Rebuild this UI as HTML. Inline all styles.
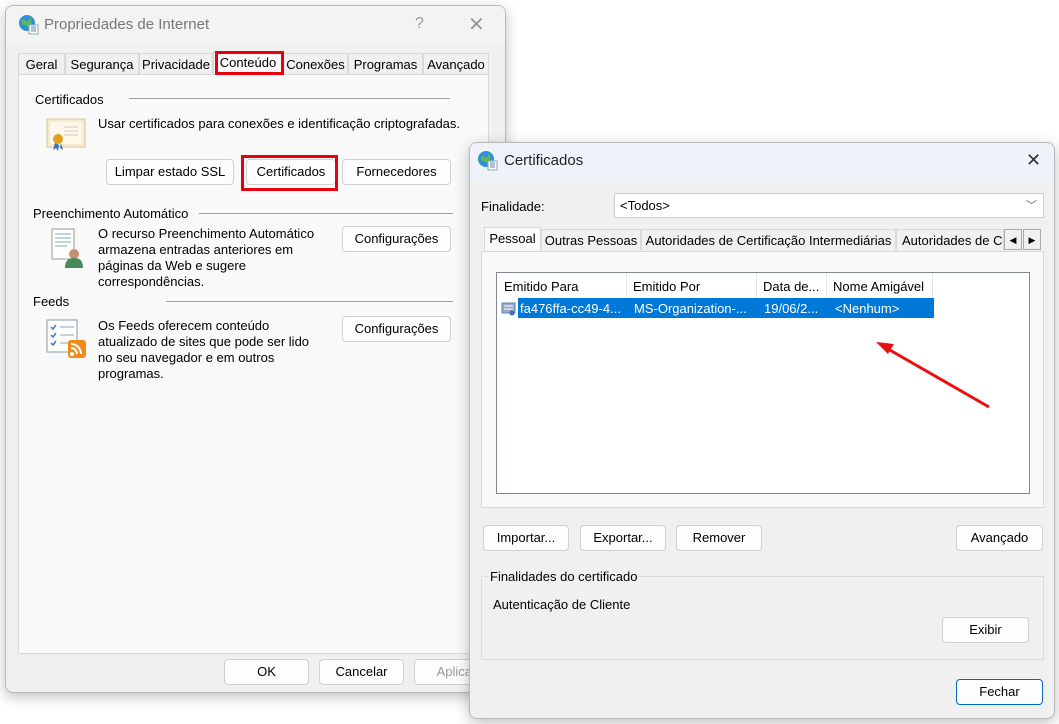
<!DOCTYPE html>
<html><head><meta charset="utf-8"><style>
*{box-sizing:border-box;margin:0;padding:0}
body{width:1059px;height:724px;background:#fff;position:relative;overflow:hidden;font-family:"Liberation Sans",sans-serif;font-size:13px;color:#000}
.a{position:absolute;white-space:nowrap}
.win{position:absolute;background:#f0f0f0;border:1px solid #b9b9b9;border-radius:8px;box-shadow:0 4px 14px rgba(0,0,0,.25);overflow:hidden}
.btn{position:absolute;background:#fdfdfd;border:1px solid #d0d0d0;border-radius:4px;text-align:center;line-height:24px;height:26px}
.tab{position:absolute;top:0;height:21px;line-height:21px;border:1px solid #d9d9d9;border-bottom:none;background:#f0f0f0;text-align:center;overflow:hidden}
.red{position:absolute;border:3px solid #e8000f}
.line{position:absolute;height:1px;background:#a0a0a0}
</style></head><body>

<!-- Left window -->
<div class="win" style="left:5px;top:5px;width:501px;height:688px;">
 <div class="a" style="left:0;top:0;width:501px;height:40px;background:#f3f3f3"></div>
 <svg class="a" style="left:12px;top:8px" width="22" height="22" viewBox="0 0 22 22"><circle cx="9" cy="9" r="8" fill="#2f8fd8"/><path d="M4 6c3-1 4 2 6 1s1-4 3-3c1 2-1 4 1 6s-3 4-5 2-4 0-5-2z" fill="#5cb85c"/><rect x="11" y="11" width="9" height="9" fill="#fff" stroke="#8aa"/><path d="M13 13h5M13 15h5M13 17h5" stroke="#58a"/></svg>
 <div class="a" style="left:38px;top:10px;font-size:15px;color:#777">Propriedades de Internet</div>
 <div class="a" style="left:409px;top:9px;font-size:16px;color:#999">?</div>
 <div class="a" style="left:462px;top:6px;font-size:20px;color:#999">✕</div>
 <div class="a" style="left:12px;top:47px;width:472px;height:22px">
  <div class="tab" style="left:0;width:47px">Geral</div>
  <div class="tab" style="left:47px;width:74px">Segurança</div>
  <div class="tab" style="left:121px;width:74px">Privacidade</div>
  <div class="tab" style="left:195px;width:70px;top:-2px;height:24px;background:#f9f9f9">Conteúdo</div>
  <div class="tab" style="left:265px;width:65px">Conexões</div>
  <div class="tab" style="left:330px;width:75px">Programas</div>
  <div class="tab" style="left:405px;width:66px">Avançado</div>
 </div>
 <div class="a" style="left:12px;top:68px;width:471px;height:580px;background:#f9f9f9;border:1px solid #d9d9d9"></div>
 <div class="red" style="left:209px;top:45px;width:69px;height:24px"></div>
 <div class="a" style="left:29px;top:86px">Certificados</div>
 <div class="line" style="left:123px;top:92px;width:321px"></div>
 <svg class="a" style="left:40px;top:111px" width="40" height="36" viewBox="0 0 40 36"><rect x="1" y="2" width="38" height="28" fill="#f7ead0" stroke="#d8c59a"/><rect x="4" y="5" width="32" height="22" fill="#fff8ea"/><path d="M18 10h14M18 14h14M18 18h14" stroke="#ccc"/><circle cx="12" cy="22" r="5" fill="#e0a020"/><path d="M9 26l-2 7 3-2 2 3 1-6M15 26l2 7-3-2" fill="#3b6fc4"/></svg>
 <div class="a" style="left:92px;top:110px">Usar certificados para conexões e identificação criptografadas.</div>
 <div class="btn" style="left:100px;top:153px;width:128px">Limpar estado SSL</div>
 <div class="btn" style="left:240px;top:153px;width:90px">Certificados</div>
 <div class="red" style="left:235px;top:149px;width:97px;height:36px"></div>
 <div class="btn" style="left:336px;top:153px;width:109px">Fornecedores</div>
 <div class="a" style="left:27px;top:200px">Preenchimento Automático</div>
 <div class="line" style="left:193px;top:207px;width:254px"></div>
 <svg class="a" style="left:44px;top:222px" width="36" height="40" viewBox="0 0 36 40"><rect x="2" y="1" width="22" height="30" fill="#fff" stroke="#999"/><path d="M5 6h16M5 10h16M5 14h16M5 18h12" stroke="#7aa"/><circle cx="24" cy="26" r="5" fill="#c89070"/><path d="M15 40c0-8 4-10 9-10s9 2 9 10z" fill="#4a8a5a"/></svg>
 <div class="a" style="left:92px;top:220px;line-height:16px;white-space:normal;width:228px">O recurso Preenchimento Automático armazena entradas anteriores em páginas da Web e sugere correspondências.</div>
 <div class="btn" style="left:336px;top:220px;width:109px">Configurações</div>
 <div class="a" style="left:27px;top:288px">Feeds</div>
 <div class="line" style="left:160px;top:295px;width:287px"></div>
 <svg class="a" style="left:40px;top:313px" width="42" height="40" viewBox="0 0 42 40"><rect x="1" y="1" width="30" height="32" fill="#fff" stroke="#8899aa"/><path d="M5 8l2 2 3-4M5 16l2 2 3-4M5 24l2 2 3-4" stroke="#3a7ad0" fill="none" stroke-width="1.5"/><path d="M14 8h14M14 16h14M14 24h14" stroke="#8aa"/><rect x="22" y="21" width="18" height="18" rx="3" fill="#f08a18"/><circle cx="26" cy="35" r="2" fill="#fff"/><path d="M25 29a6 6 0 0 1 6 6M25 25a10 10 0 0 1 10 10" stroke="#fff" stroke-width="2" fill="none"/></svg>
 <div class="a" style="left:92px;top:312px;line-height:16px;white-space:normal;width:222px">Os Feeds oferecem conteúdo atualizado de sites que pode ser lido no seu navegador e em outros programas.</div>
 <div class="btn" style="left:336px;top:310px;width:109px">Configurações</div>
 <div class="btn" style="left:218px;top:653px;width:85px">OK</div>
 <div class="btn" style="left:313px;top:653px;width:85px">Cancelar</div>
 <div class="btn" style="left:408px;top:653px;width:85px;color:#999">Aplicar</div>
</div>

<!-- Right window -->
<div class="win" style="left:469px;top:142px;width:586px;height:577px;">
 <div class="a" style="left:0;top:0;width:586px;height:37px;background:#eef2f9"></div>
 <svg class="a" style="left:7px;top:7px" width="22" height="22" viewBox="0 0 22 22"><circle cx="9" cy="9" r="8" fill="#2f8fd8"/><path d="M4 6c3-1 4 2 6 1s1-4 3-3c1 2-1 4 1 6s-3 4-5 2-4 0-5-2z" fill="#5cb85c"/><rect x="11" y="11" width="9" height="9" fill="#fff" stroke="#8aa"/><path d="M13 13h5M13 15h5M13 17h5" stroke="#58a"/></svg>
 <div class="a" style="left:34px;top:9px;font-size:15px;color:#222">Certificados</div>
 <div class="a" style="left:556px;top:7px;font-size:18px;color:#333">✕</div>
 <div class="a" style="left:11px;top:56px">Finalidade:</div>
 <div class="a" style="left:144px;top:50px;width:430px;height:25px;background:#fff;border:1px solid #ccc;padding:4px 5px">&lt;Todos&gt;<span style="position:absolute;right:6px;top:3px;color:#666;font-size:11px">﹀</span></div>
 <div class="a" style="left:11px;top:86px;width:563px;height:22px">
  <div class="tab" style="left:3px;width:57px;top:-2px;height:24px;background:#f9f9f9">Pessoal</div>
  <div class="tab" style="left:60px;width:100px">Outras Pessoas</div>
  <div class="tab" style="left:160px;width:255px">Autoridades de Certificação Intermediárias</div>
  <div class="tab" style="left:415px;width:108px;text-align:left;padding-left:5px">Autoridades de Ce</div>
  <div class="tab" style="left:523px;width:18px;border:1px solid #aaa;background:#f0f0f0;font-size:9px">◀</div>
  <div class="tab" style="left:542px;width:18px;border:1px solid #aaa;background:#f0f0f0;font-size:9px">▶</div>
 </div>
 <div class="a" style="left:11px;top:108px;width:563px;height:257px;background:#f9f9f9;border:1px solid #d9d9d9"></div>
 <div class="a" style="left:26px;top:129px;width:534px;height:222px;background:#fff;border:1px solid #828790"></div>
 <div class="a" style="left:27px;top:130px;width:437px;height:25px;background:#fff">
  <div class="a" style="left:0;top:0;width:130px;height:25px;border-right:1px solid #e5e5e5;padding:6px 7px">Emitido Para</div>
  <div class="a" style="left:130px;top:0;width:130px;height:25px;border-right:1px solid #e5e5e5;padding:6px 6px">Emitido Por</div>
  <div class="a" style="left:260px;top:0;width:70px;height:25px;border-right:1px solid #e5e5e5;padding:6px 6px">Data de...</div>
  <div class="a" style="left:330px;top:0;width:106px;height:25px;border-right:1px solid #e5e5e5;padding:6px 6px">Nome Amigável</div>
 </div>
 <svg class="a" style="left:31px;top:158px" width="16" height="16" viewBox="0 0 16 16"><rect x="1" y="2" width="13" height="10" fill="#9ac" stroke="#58a"/><path d="M3 5h9M3 8h9" stroke="#fff"/><circle cx="11" cy="12" r="2.5" fill="#3a6fc4"/></svg>
 <div class="a" style="left:48px;top:155px;width:416px;height:20px;background:#0078d7;color:#fff">
  <div class="a" style="left:2px;top:3px">fa476ffa-cc49-4...</div>
  <div class="a" style="left:116px;top:3px">MS-Organization-...</div>
  <div class="a" style="left:246px;top:3px">19/06/2...</div>
  <div class="a" style="left:317px;top:3px">&lt;Nenhum&gt;</div>
 </div>
 <div class="btn" style="left:13px;top:382px;width:86px">Importar...</div>
 <div class="btn" style="left:110px;top:382px;width:86px">Exportar...</div>
 <div class="btn" style="left:206px;top:382px;width:86px">Remover</div>
 <div class="btn" style="left:486px;top:382px;width:87px">Avançado</div>
 <div class="a" style="left:11px;top:433px;width:563px;height:84px;border:1px solid #dcdcdc"></div>
 <div class="a" style="left:18px;top:426px;background:#f0f0f0;padding:0 2px">Finalidades do certificado</div>
 <div class="a" style="left:23px;top:454px">Autenticação de Cliente</div>
 <div class="btn" style="left:472px;top:474px;width:87px">Exibir</div>
 <div class="btn" style="left:486px;top:536px;width:87px;border-color:#0067c0">Fechar</div>
</div>

<svg class="a" style="left:0;top:0" width="1059" height="724"><line x1="989" y1="407" x2="888" y2="349" stroke="#e81010" stroke-width="3"/><path d="M876 342l18 2-6 10z" fill="#e81010"/></svg>
</body></html>
